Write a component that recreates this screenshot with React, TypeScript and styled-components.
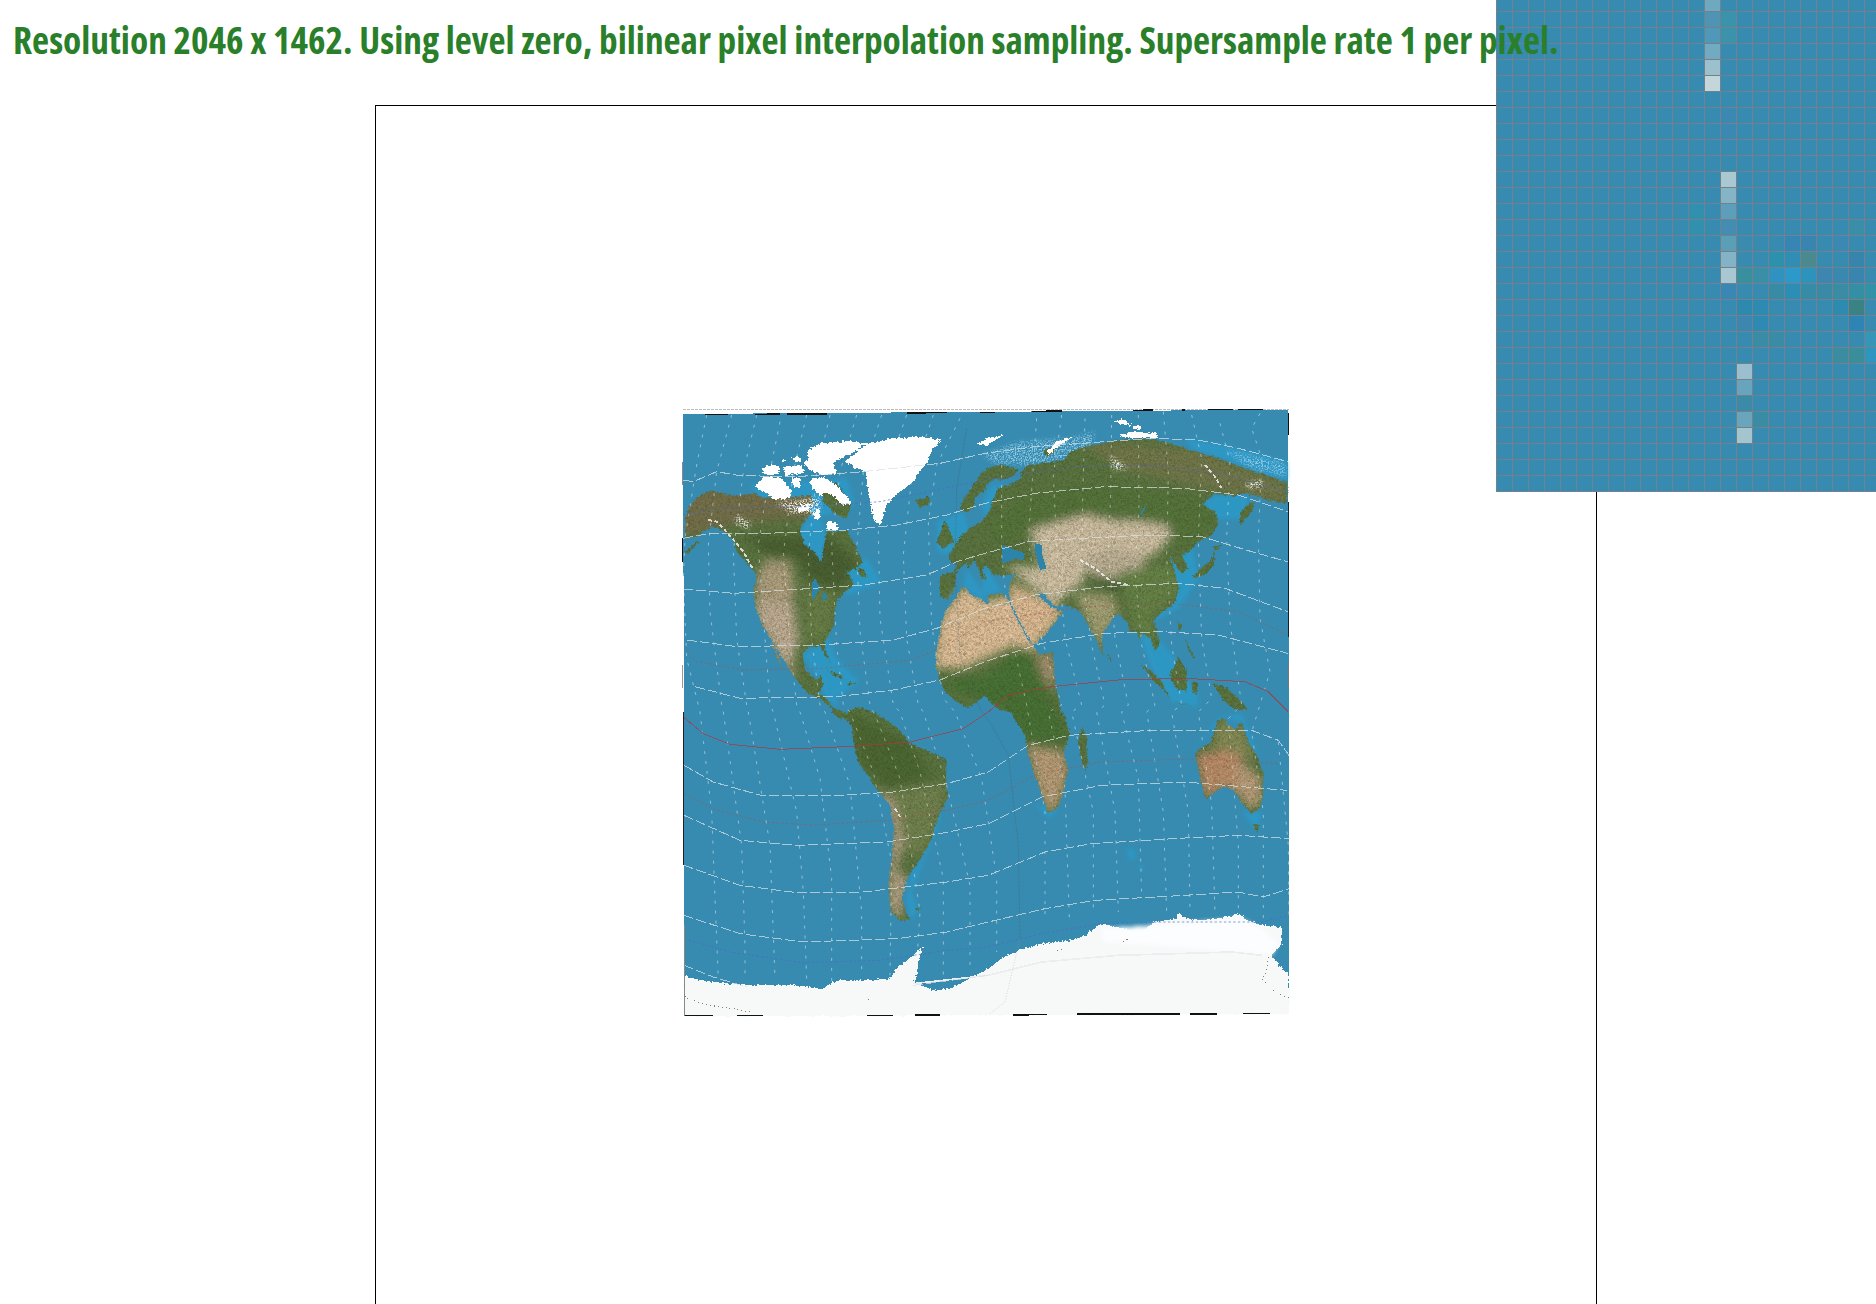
import React from "react";
import styled, { createGlobalStyle } from "styled-components";

const Global = createGlobalStyle`
  html, body { margin: 0; padding: 0; background: #fff; overflow: hidden; }
  html { height: 1304px; }
  #root { height: 1304px; overflow: hidden; }
`;

const Page = styled.div`
  position: relative;
  width: 1876px;
  height: 1304px;
  overflow: hidden;
`;
const Status = styled.h1`
  position: relative;
  z-index: 2;
  margin: 0;
  height: 105px;
  padding: 17px 0 0 13px;
  box-sizing: border-box;
  font-family: "Open Sans", "Liberation Sans", sans-serif;
  font-stretch: 75%;
  font-weight: 700;
  font-size: 37.3px;
  line-height: 46px;
  color: #2a7f2a;
  white-space: nowrap;
`;
const Stage = styled.section`
  display: flex;
  align-items: center;
  justify-content: center;
  box-sizing: border-box;
  width: 1222px;
  height: 1217px;
  margin-left: 375px;
  border: 1px solid #000;
`;
const MapFigure = styled.svg`
  display: block;
  width: 615px;
  height: 617px;
  margin-left: 3px;
  flex: none;
`;
const Magnifier = styled.svg`
  position: absolute;
  top: 0;
  right: 0;
  z-index: 1;
  display: block;
  width: 380px;
  height: 492px;
`;

/* Tracing helpers: every outline is written in the 3x coordinates of one map quadrant. */
const shift = (s: string, dx: number, dy: number) =>
  s.trim().split(/\s+/).map((p) => {
    const [x, y] = p.split(",").map(Number);
    return `${x + dx},${y + dy}`;
  }).join(" ");
const q1 = (s: string) => s;
const q2 = (s: string) => shift(s, 915, 0);
const q3 = (s: string) => shift(s, 0, 921);
const q4 = (s: string) => shift(s, 915, 921);

const land: string[] = [
  q1("15,340 30,300 60,270 95,255 130,268 165,272 220,265 250,278 285,290 330,305 380,305 400,322 375,345 360,375 372,415 400,440 425,470 432,420 440,378 470,380 500,375 525,420 548,470 530,490 495,505 510,510 520,540 490,565 470,590 465,625 462,660 445,690 432,718 445,760 455,775 440,760 420,722 385,725 368,748 375,795 408,825 425,810 430,840 412,865 440,880 470,925 450,905 420,882 380,862 345,820 320,780 292,735 270,700 242,650 225,600 220,560 230,510 205,480 170,440 160,405 130,378 100,365 70,380 50,395 15,400"),
  q1("272,708 285,730 310,790 290,760"),
  q1("15,440 50,408 58,410 22,448"),
  q1("440,795 480,810 500,825 470,815"),
  q1("510,830 530,835 500,842"),
  q1("535,490 555,495 560,515 540,515"),
  q1("420,225 470,235 515,295 500,340 470,330 430,290"),
  q1("250,275 300,282 390,270 405,300 350,315 280,295"),
  q1("705,285 745,275 750,295 720,308"),
  q1("770,412 795,345 810,380 822,410 788,432"),
  q1("838,312 850,285 880,240 905,205 925,190") + " " + q2("20,185 60,180 100,195 80,215 50,225 30,220 5,240 -5,262") + " " + q1("885,275 880,310 860,322"),
  q1("780,515 800,505 822,502 832,478 812,470 805,455 822,425 840,395 870,370 905,350 915,335") + " " +
    q2("15,315 25,280 40,250 70,240 105,225 110,195 135,180 170,175 240,165 255,140 285,130 330,120 400,105 480,100 540,110 620,135 700,160 780,190 860,215 908,235 908,295 860,290 815,272 770,265 745,275 690,265 650,300 690,320 700,360 680,390 640,410 610,440 590,450 610,490 590,505 565,470 555,450 570,500 582,550 570,590 550,610 520,630 505,645 525,710 510,740 495,700 470,680 465,705 455,680 435,680 425,650 400,625 385,640 350,690 355,755 330,700 305,650 280,615 240,600 205,600 175,565 160,570 195,605 215,612 232,622 205,660 170,700 145,722 115,670 85,610 72,575 75,530 90,510 60,512 25,510 10,490 30,520 20,500 0,480") + " " +
    q1("905,495 920,525 905,520 895,490 885,465 865,490 860,470 840,490 828,505 825,545 805,582 780,575"),
  q1("768,745 785,650 800,615 850,545 875,570 905,585 925,598") + " " +
    q2("10,570 50,565 65,575 75,600 100,650 130,705 165,748 205,740 210,830 230,925") + " " +
    q4("235,0 255,70 235,120 250,170 235,240 220,285 190,305 170,250 145,180 125,110 120,70 75,0") + " " +
    q2("45,915 15,890 0,870") + " " + q1("905,880 865,910 830,890 795,860 780,830 768,790"),
  q1("510,915 540,905 585,925") + " " + q3("605,15 660,55 690,95 740,115 800,145 798,200 802,260 778,310 755,380 722,440 682,495 665,560 680,605 690,622 660,628 632,600 625,520 635,440 642,350 630,280 590,232 535,150 520,90 515,40 500,25 470,15 455,0") + " " + q1("470,912 500,925"),
  q4("290,45 305,70 308,150 300,182 290,150 280,90"),
  q4("630,125 650,105 675,95 700,25 720,18 730,40 750,50 770,30 790,90 815,130 835,190 835,250 825,290 800,305 775,280 745,235 715,225 690,240 665,262 655,240 640,170"),
  q4("805,335 825,340 815,362"),
  q2("465,775 500,800 530,830 555,880 530,850 500,820"),
  q2("555,810 580,755 605,800 605,860 570,850"),
  q2("560,885 620,905 640,910 600,900"),
  q2("620,830 640,835 632,870 622,860"),
  q2("680,835 720,845 770,890 790,915 750,915 715,885 700,860"),
  q2("620,520 650,490 680,465 690,425 688,480 660,510"),
  q2("680,425 710,420 695,435"),
  q2("790,300 808,288 800,320 765,360 765,320"),
  q2("370,745 382,770 372,765"),
  q2("580,645 590,670 580,680"), q2("600,700 625,750 630,765 610,735"),
  q2("170,140 200,125 220,125 190,155"),
  q3("705,590 722,585 715,596"),
];

const shallow: string[] = [
  q1("358,385 380,350 420,340 440,380 425,468 392,432 370,420"),
  q1("210,240 500,220 525,300 400,342 250,290"),
  q2("600,100 720,120 905,170 905,225 780,185 620,130"),
  q1("770,350 850,320 865,370 822,450 770,440"),
  q1("490,480 560,460 605,530 500,572"),
  q1("440,690 470,760 540,830 480,870 400,800 368,745 420,725"),
  q1("410,800 470,840 470,905 430,870"),
  q2("560,450 620,420 640,520 590,600 520,645 505,630 570,590"),
  q2("465,690 520,700 570,760 640,870 640,908 560,890 500,790"),
  q4("635,100 705,15 770,5 825,140 790,90 770,30 720,18"),
  q2("650,290 700,270 790,270 780,340 700,342"),
  q2("-10,300 20,240 60,240 0,340"),
  q1("860,490 925,590 880,570 850,545"),
  q2("0,480 50,560 10,570 -10,560"),
  q3("725,440 695,490 680,560 690,622 715,600 695,540 750,400 785,310 772,310"),
  q4("425,410 450,410 450,445 430,440"),
  q4("460,455 478,465 470,480"),
  q4("770,300 830,300 820,360"),
  q4("150,280 195,320 220,290"),
];

/* the paler, stippled shelf north of Russia */
const paleShelf: string[] = [
  q2("-10,150 100,110 250,100 330,80 320,120 240,165 130,180 30,175"),
  q2("720,135 900,175 905,215 790,185"),
];

const water: string[] = [
  q2("50,430 55,420 90,435 120,445 115,465 90,460 70,470 50,475"),
  q2("150,415 170,420 172,450 185,490 165,495 150,440"),
  q2("465,325 490,290 470,330"),
  q1("395,535 405,520 420,550 395,590"),
  q1("430,560 445,575 425,590"),
];

type Patch = { fill: string; pts: string };
const soil: Patch[] = [
  { fill: "#74704b", pts: q1("0,250 420,260 420,345 300,340 150,360 0,400") },
  { fill: "#4a6130", pts: q1("200,395 440,390 540,480 470,560 380,520 350,460 260,450") },
  { fill: "#677f47", pts: q1("370,540 465,560 450,690 370,720") },
  { fill: "#ae9f7f", pts: q1("255,465 330,470 345,560 325,610 230,610 225,530") },
  { fill: "#c0ad95", pts: q1("220,600 340,590 355,710 335,770 350,830 290,750 240,660") },
  { fill: "#66804a", pts: q1("350,830 400,860 470,925 410,880") },
  { fill: "#e0c09a", pts: q1("760,790 780,640 850,540 920,590") + " " + q2("60,570 90,610 165,745 90,720 0,760") + " " + q1("850,790") },
  { fill: "#dfbc94", pts: q2("72,530 215,600 235,625 170,705 140,725 80,610") },
  { fill: "#477236", pts: q1("780,840 860,810 915,820") + " " + q2("60,760 130,730 170,830 215,925") + " " + q4("235,30 245,90 130,100 70,0") + " " + q2("30,900") },
  { fill: "#ab9476", pts: q2("155,755 205,745 215,860 175,820") },
  { fill: "#b99d79", pts: q4("125,100 240,120 250,180 225,270 190,310 160,230") },
  { fill: "#d2c2a6", pts: q2("60,480 170,490 135,370 210,315 300,330 400,350 540,335 565,380 520,440 470,465 400,510 300,495 290,535 210,595 160,560") },
  { fill: "#bfb298", pts: q2("290,460 380,430 470,440 480,490 400,520 320,510") },
  { fill: "#a3a075", pts: q2("270,560 380,570 400,625 360,700 355,750 300,640") },
  { fill: "#466434", pts: q2("300,505 340,545 420,565 400,530") },
  { fill: "#668347", pts: q2("400,500 570,470 585,560 500,640 520,710 450,680") },
  { fill: "#55753b", pts: q2("0,380 100,280 300,240 640,280 700,340 600,440 540,360 300,330 150,370 60,420") },
  { fill: "#72784c", pts: q2("280,110 620,130 908,230 908,300 700,260 400,190") },
  { fill: "#4b6830", pts: q3("505,0 690,90 760,200 620,230 540,150") },
  { fill: "#728350", pts: q3("630,240 800,210 780,320 720,440 660,400") },
  { fill: "#b0a084", pts: q3("590,232 640,262 670,390 650,480 690,500 660,625 630,600 625,520 635,350") },
  { fill: "#bb8d6b", pts: q4("630,130 720,110 770,130 770,250 720,225 660,260") },
  { fill: "#bb9f7b", pts: q4("760,140 830,200 825,280 790,290 750,230") },
  { fill: "#858b57", pts: q4("680,90 715,15 770,40 815,140 770,130 700,110") },
];

const ice: string[] = [
  q1("245,190 275,178 300,185 298,205 270,212 250,205"),
  q1("310,185 365,180 370,205 315,210"),
  q1("225,240 255,215 300,218 335,255 330,280 280,282 255,262 235,255"),
  q1("335,155 360,155 365,170 345,172"), q1("305,165 315,165 310,175"),
  q1("385,135 420,115 500,108 555,115 525,140 490,155 460,175 470,205 430,210 390,195 370,175 385,160"),
  q1("335,220 362,220 360,250 340,245"),
  q1("390,225 430,215 470,240 500,275 515,295 490,300 450,265 420,270 395,250"),
  q1("350,310 395,295 385,315 360,320"),
  q1("400,320 420,310 420,340 402,342"),
  q1("440,350 470,355 475,375 440,375"),
  q1("495,170 530,140 560,115 640,100 720,95 785,105 760,130 745,165 700,230 660,260 620,300 600,362 580,340 570,290 560,230 555,200 520,185"),
  q1("890,115 925,100 925,125"),
  q2("0,100 55,90 40,100 5,120"),
  q2("390,50 410,40 440,60 400,55"), q2("440,65 465,60 470,70 445,72"),
  q2("400,95 440,80 515,85 520,100 450,100"),
  q2("190,135 215,110 265,95 215,125 192,150"),
];
const snow: string[] = [
  q1("285,292 420,278 420,322 340,326"),
  q1("170,332 212,352 205,372 165,352"),
  q2("375,150 430,190 385,195"),
  q2("780,235 830,225 835,245 790,250"),
];

const antarctica =
  q3("12,790 60,805 140,815 250,820 340,820 430,830 470,805 560,805 630,800 650,770 700,730 730,700 715,750 710,790 700,810 760,835 810,830 870,800 925,770") + " " +
  q4("50,740 100,715 170,695 260,685 300,670 350,635 420,650 470,660 510,630 570,620 580,605 620,625 700,620 760,605 790,625 830,640 890,645 890,700 860,730 890,770 912,790 912,905 0,910") + " " +
  q3("15,912");
const iceFloor = "14,1780 1827,1780 1827,1826 14,1833";

const specks: string[] = [
  q1("85,345 110,350 150,392 190,440 220,495"),
  q2("660,180 690,215 710,250"),
  q2("285,465 330,490 380,530 430,540"),
  q3("645,290 660,315"),
];
const antMarks: string[] = [
  q3("20,860 90,880 170,892 210,900"),
  q4("850,735 845,780 830,800 870,840 905,855"),
  q4("415,690 430,680"), q3("565,860 572,868"), q4("215,715 230,712"),
];

const parallels: string[] = [
  q1("10,225 40,230 110,200 180,212 350,215 550,200 780,175 915,145") + " " + q2("150,125 290,115 500,100 640,105 760,130 908,170"),
  q1("10,400 90,385 260,385 500,375 650,360 800,330 915,295") + " " + q2("150,265 360,245 600,250 760,270 908,320"),
  q1("10,552 160,565 400,550 550,540 740,510 830,470 915,445") + " " + q2("130,410 290,400 500,390 650,395 800,440 908,470"),
  q1("20,705 170,725 420,720 640,705 770,670 915,610") + " " + q2("150,570 360,545 580,535 720,550 908,620"),
  q1("45,845 180,880 470,875 640,855 780,825 915,770") + " " + q2("170,715 360,685 530,680 700,690 908,745"),
  q3("12,160 100,210 250,252 480,250 640,240 800,215 925,180") + " " + q4("130,100 250,70 500,55 800,55 880,85 912,130"),
  q3("12,310 180,385 350,400 620,390 780,365 925,335") + " " + q4("170,255 350,220 600,210 905,235"),
  q3("12,460 180,520 350,542 550,540 800,510 925,490") + " " + q4("180,420 320,395 600,378 760,370 915,380"),
  q3("12,610 180,665 370,690 650,680 800,660 925,630") + " " + q4("180,590 330,565 600,550 760,540 835,555 912,530"),
  q3("12,760 100,795 200,825"),
  q3("700,820 925,790"),
];

const iceLine = q3("700,815 925,790") + " " + q4("170,750 400,730 740,720 830,730");

const blueCircles: string[] = [
  q1("10,330 120,310 380,305 600,290 915,225") + " " + q2("270,185 500,180 700,205 908,260"),
  q3("12,680 150,720 370,752 600,745 800,715 925,705") + " " + q4("170,665 350,635 500,630 830,630 912,610"),
];
const redDotted: string[] = [
  q1("20,735 50,770 190,795 420,790 700,765 800,720 915,650") + " " + q2("130,630 310,605 560,595 760,620 908,690"),
  q3("12,245 100,290 250,330 400,340 620,325 800,295 925,265") + " " + q4("160,185 350,150 650,140 880,155"),
];
const equator = q3("10,15 70,65 150,97 300,112 520,103 690,90 850,50 925,0") + " " + q2("70,870 200,845 400,825 600,820 780,830 850,860 910,920");

const primeLine = q1("860,70 830,250 825,500 840,750 900,910") + " " + q3("935,40 985,130 1015,400 1020,680");
const primeOnIce = q3("1020,680 975,870 930,905");

const meridians: string[] = [
  q1("80,30 50,180 15,400 10,520 20,760 60,920") + " " + q3("60,0 95,300 105,560 115,800"),
  q1("155,30 110,200 85,420 90,620 125,900") + " " + q3("130,0 185,400 195,700 195,800"),
  q1("230,30 190,200 160,440 170,700 200,900") + " " + q3("205,0 270,400 285,800"),
  q1("300,50 270,200 235,420 255,700 270,900") + " " + q3("280,0 350,300 370,540 380,800"),
  q1("380,30 340,200 310,450 330,720 350,900") + " " + q3("360,0 420,200 455,500 455,820"),
  q1("450,30 410,200 385,450 395,700 420,900") + " " + q3("435,0 510,220 545,600 545,780"),
  q1("530,30 480,200 455,420 470,720 490,900") + " " + q3("510,0 580,180 635,450 630,790"),
  q1("605,30 550,200 530,430 540,680 570,900") + " " + q3("590,20 660,200 720,600 710,760"),
  q1("680,30 620,200 595,380 600,640 640,900") + " " + q3("660,0 720,180 790,500 790,800"),
  q1("760,30 695,220 670,450 680,700 715,900") + " " + q3("730,0 800,220 870,520 870,780"),
  q1("840,40 770,180 745,350 755,660 790,880") + " " + q3("825,0 905,200 950,500 950,720"),
  q2("50,180 50,450 70,650 125,900 180,1221 180,1530"),
  q2("155,40 130,400 170,700 230,900") + " " + q4("190,0 240,230 253,620"),
  q2("230,30 205,210 215,420 240,700 290,900") + " " + q4("260,0 325,300 325,600"),
  q2("300,40 293,280 290,500 320,720 360,900") + " " + q4("335,0 390,300 400,600"),
  q2("380,30 377,270 370,430 390,700 430,900") + " " + q4("410,0 460,200 470,550"),
  q2("460,30 462,300 450,500 470,720 510,900") + " " + q4("485,0 535,300 545,600"),
  q2("535,20 550,200 545,450 560,720 590,900") + " " + q4("560,0 610,300 615,600"),
  q2("620,30 650,160 640,400 650,700 680,880") + " " + q4("640,0 680,280 690,600"),
  q2("705,55 735,170 725,400 735,650 770,900") + " " + q4("730,20 760,400 760,600"),
  q2("825,25 800,70 830,160 820,400 825,640 855,800") + " " + q4("800,60 835,300 835,630"),
  q4("880,90 910,400 912,620"),
];

const blackRuns: [number, number, number, number][] = [
  [75, 28, 145, 28], [225, 28, 300, 27], [320, 27, 440, 27], [680, 24, 800, 23], [900, 23, 945, 22],
  [1055, 19, 1145, 18], [1360, 16, 1420, 15], [1505, 15, 1515, 15], [1585, 14, 1660, 14], [1675, 14, 1750, 14],
  [1000, 1830, 1100, 1829], [1190, 1827, 1500, 1827], [1530, 1827, 1610, 1827], [1690, 1826, 1770, 1826],
  [15, 1832, 100, 1832], [170, 1832, 250, 1831], [560, 1832, 640, 1831], [705, 1830, 780, 1830],
];
const edgeRuns: { x: number; a: number; b: number; c: string }[] = [
  { x: 7, a: 170, b: 240, c: "#888" }, { x: 6, a: 400, b: 470, c: "#111" }, { x: 6, a: 780, b: 850, c: "#999" },
  { x: 11, a: 921, b: 1380, c: "#222" }, { x: 13, a: 1560, b: 1830, c: "#888" },
  { x: 1825, a: 25, b: 90, c: "#111" }, { x: 1826, a: 290, b: 695, c: "#123" }, { x: 1826, a: 775, b: 850, c: "#777" },
];

const MapDrawing = () => (
  <MapFigure viewBox="0 0 1845 1851" shapeRendering="crispEdges">
    <defs>
      <clipPath id="landClip">
        {land.map((p, i) => <polygon key={i} points={p} />)}
      </clipPath>
      <filter id="soft" x="-10%" y="-10%" width="120%" height="120%">
        <feGaussianBlur stdDeviation="14" />
      </filter>
      <filter id="shelf" x="-20%" y="-20%" width="140%" height="140%">
        <feGaussianBlur stdDeviation="7" />
      </filter>
      <filter id="mottle" x="0" y="0" width="100%" height="100%" colorInterpolationFilters="sRGB">
        <feTurbulence type="fractalNoise" baseFrequency="0.16" numOctaves="2" seed="7" result="n" />
        <feColorMatrix in="n" type="matrix" values="0 0 0 0 0.2  0 0 0 0 0.2  0 0 0 0 0.1  0.8 0 0 0 -0.3" result="d" />
        <feComposite in="d" in2="SourceAlpha" operator="in" result="dm" />
        <feMerge><feMergeNode in="SourceGraphic" /><feMergeNode in="dm" /></feMerge>
      </filter>
      <filter id="ragged" x="-5%" y="-5%" width="110%" height="110%" colorInterpolationFilters="sRGB">
        <feTurbulence type="fractalNoise" baseFrequency="0.13" numOctaves="2" seed="3" />
        <feDisplacementMap in="SourceGraphic" scale="14" xChannelSelector="R" yChannelSelector="G" />
      </filter>
      <filter id="stipple" x="-10%" y="-10%" width="120%" height="120%" colorInterpolationFilters="sRGB">
        <feGaussianBlur stdDeviation="6" result="b" />
        <feTurbulence type="fractalNoise" baseFrequency="0.22" numOctaves="2" seed="11" result="n" />
        <feColorMatrix in="n" type="matrix" values="0 0 0 0 1  0 0 0 0 1  0 0 0 0 1  4 0 0 0 -1.7" result="a" />
        <feComposite in="b" in2="a" operator="in" />
      </filter>
    </defs>

    <polygon points="10,27 1825,14 1828,1826 12,1833" fill="#378bb0" />
    <g filter="url(#shelf)" opacity="0.72" fill="#2b9ccd">
      {shallow.map((p, i) => <polygon key={i} points={p} />)}
    </g>
    <g filter="url(#stipple)" fill="#8cc8e4">
      {paleShelf.map((p, i) => <polygon key={i} points={p} />)}
    </g>

    <g filter="url(#ragged)">
      <g filter="url(#mottle)" clipPath="url(#landClip)">
        <rect x="0" y="0" width="1845" height="1851" fill="#5a7540" />
        <g filter="url(#soft)">
          {soil.map((p, i) => <polygon key={i} points={p.pts} fill={p.fill} />)}
        </g>
      </g>
    </g>

    {water.map((p, i) => <polygon key={i} points={p} fill="#2d84ab" />)}

    <polygon points={iceFloor} fill="#f7f8f8" />
    <g filter="url(#ragged)">
      {ice.map((p, i) => <polygon key={i} points={p} fill="#ffffff" />)}
      <polygon points={antarctica} fill="#f7f8f8" />
    </g>
    <g filter="url(#stipple)" fill="#ffffff">
      {snow.map((p, i) => <polygon key={i} points={p} />)}
    </g>
    <polygon points={q4("350,650 500,640 770,620 830,650 880,690 860,730 500,700 350,690")} fill="#fbfdff" filter="url(#shelf)" />
    <polyline points={iceLine} fill="none" stroke="#ecedee" strokeWidth="5" />
    {antMarks.map((p, i) => <polyline key={i} points={p} fill="none" stroke="#8a7f66" strokeWidth="3" strokeDasharray="3 9" />)}
    {specks.map((p, i) => <polyline key={i} points={p} fill="none" stroke="#eeeeee" strokeWidth="6" strokeDasharray="12 7" opacity="0.85" />)}

    <g fill="none" strokeLinejoin="round">
      <polyline points={primeLine} stroke="#4a5a60" strokeWidth="2" strokeDasharray="8 3" opacity="0.5" />
      <polyline points={primeOnIce} stroke="#9aa0a2" strokeWidth="1.6" strokeDasharray="3 5" opacity="0.7" />
      {meridians.map((p, i) => <polyline key={i} points={p} stroke="#ffffff" strokeWidth="2.2" strokeDasharray="9 21" opacity="0.62" />)}
      {parallels.map((p, i) => <polyline key={i} points={p} stroke="#d9e2e5" strokeWidth="3" strokeDasharray="30 9" opacity="0.72" />)}
      {blueCircles.map((p, i) => <polyline key={i} points={p} stroke="#4f63c8" strokeWidth="2.6" strokeDasharray="7 7" opacity="0.75" />)}
      {redDotted.map((p, i) => <polyline key={i} points={p} stroke="#a0524f" strokeWidth="2.6" strokeDasharray="7 7" opacity="0.7" />)}
      <polyline points={equator} stroke="#a83a3c" strokeWidth="3" opacity="0.72" />
    </g>

    <line x1="10" y1="14" x2="1828" y2="13" stroke="#9a9a9a" strokeWidth="2" strokeDasharray="7 5" />
    {blackRuns.map(([a, b, c, d], i) => <line key={i} x1={a} y1={b} x2={c} y2={d} stroke="#111" strokeWidth="4" />)}
    {edgeRuns.map((e, i) => <line key={i} x1={e.x} y1={e.a} x2={e.x} y2={e.b} stroke={e.c} strokeWidth="3" />)}
  </MapFigure>
);

/* The magnified corner: col/row of each pixel that differs from the ocean. */
const cells: [number, number, string][] = [
  [13,0,"#6fa9c0"],[13,1,"#4f94b3"],[13,2,"#5098b7"],[13,3,"#72aac1"],[13,4,"#9cc0cc"],[13,5,"#c3d6d9"],
  [14,1,"#3a92ab"],[14,2,"#3a92ab"],[14,7,"#3b88b2"],[14,8,"#3b88b2"],
  [14,11,"#aac8d0"],[14,12,"#84b4c5"],[14,13,"#5d9fbb"],[14,14,"#448cb1"],[14,15,"#5a9fb6"],[14,16,"#83b3c5"],[14,17,"#a9c6d3"],[14,18,"#3a86b4"],
  [15,15,"#3a8bad"],[15,17,"#38909f"],[15,19,"#2d89b0"],[15,20,"#3c86b0"],
  [15,23,"#9bbfce"],[15,24,"#69a4bd"],[15,25,"#3b8aa8"],[15,26,"#6aa5bc"],[15,27,"#a3c5cd"],
  [16,17,"#3a8fa6"],[16,19,"#2d8ab3"],[16,20,"#2e8ab3"],[16,21,"#398ba6"],[16,26,"#3a8ba4"],
  [17,16,"#2d90ad"],[17,17,"#2f92c0"],[17,18,"#388aa5"],[17,21,"#3a8ba6"],
  [18,15,"#3585b5"],[18,16,"#308db4"],[18,17,"#2b99c9"],[18,18,"#2c8eb5"],
  [19,15,"#3a84b2"],[19,16,"#4a8a8e"],[19,17,"#2c94bc"],[19,18,"#368ba6"],
  [20,18,"#3b8aa5"],[20,17,"#3e86b0"],
  [21,15,"#3a88b3"],[21,17,"#3a87b0"],[21,18,"#3a8ca5"],[21,19,"#2d8ab0"],[21,22,"#3b8ca0"],
  [22,14,"#3a8ea8"],[22,16,"#3785ad"],[22,17,"#3a85b0"],[22,18,"#358fa4"],[22,19,"#3b8285"],[22,20,"#2e85b5"],[22,22,"#3a8d9a"],
  [23,18,"#3292a8"],[23,21,"#3596b8"],[23,22,"#2e94c0"],
  [12,13,"#3090ae"],[12,14,"#3090ae"],
];

const ZoomInset = () => (
  <Magnifier viewBox="0 0 380 492" shapeRendering="crispEdges">
    <rect width="380" height="491" fill="#388bb0" />
    {cells.map(([c, r, fill], i) => <rect key={i} x={c * 16} y={r * 16 - 5} width="16" height="16" fill={fill} />)}
    {Array.from({ length: 24 }, (_, c) => <rect key={`v${c}`} x={c * 16} y="0" width="1" height="491" fill="#6f828e" />)}
    {Array.from({ length: 31 }, (_, r) => <rect key={`h${r}`} x="0" y={r * 16 + 11} width="380" height="1" fill="#6f828e" />)}
  </Magnifier>
);

export default function App() {
  return (
    <Page>
      <Global />
      <Status>Resolution 2046 x 1462. Using level zero, bilinear pixel interpolation sampling. Supersample rate 1 per pixel.</Status>
      <Stage>
        <MapDrawing />
      </Stage>
      <ZoomInset />
    </Page>
  );
}
